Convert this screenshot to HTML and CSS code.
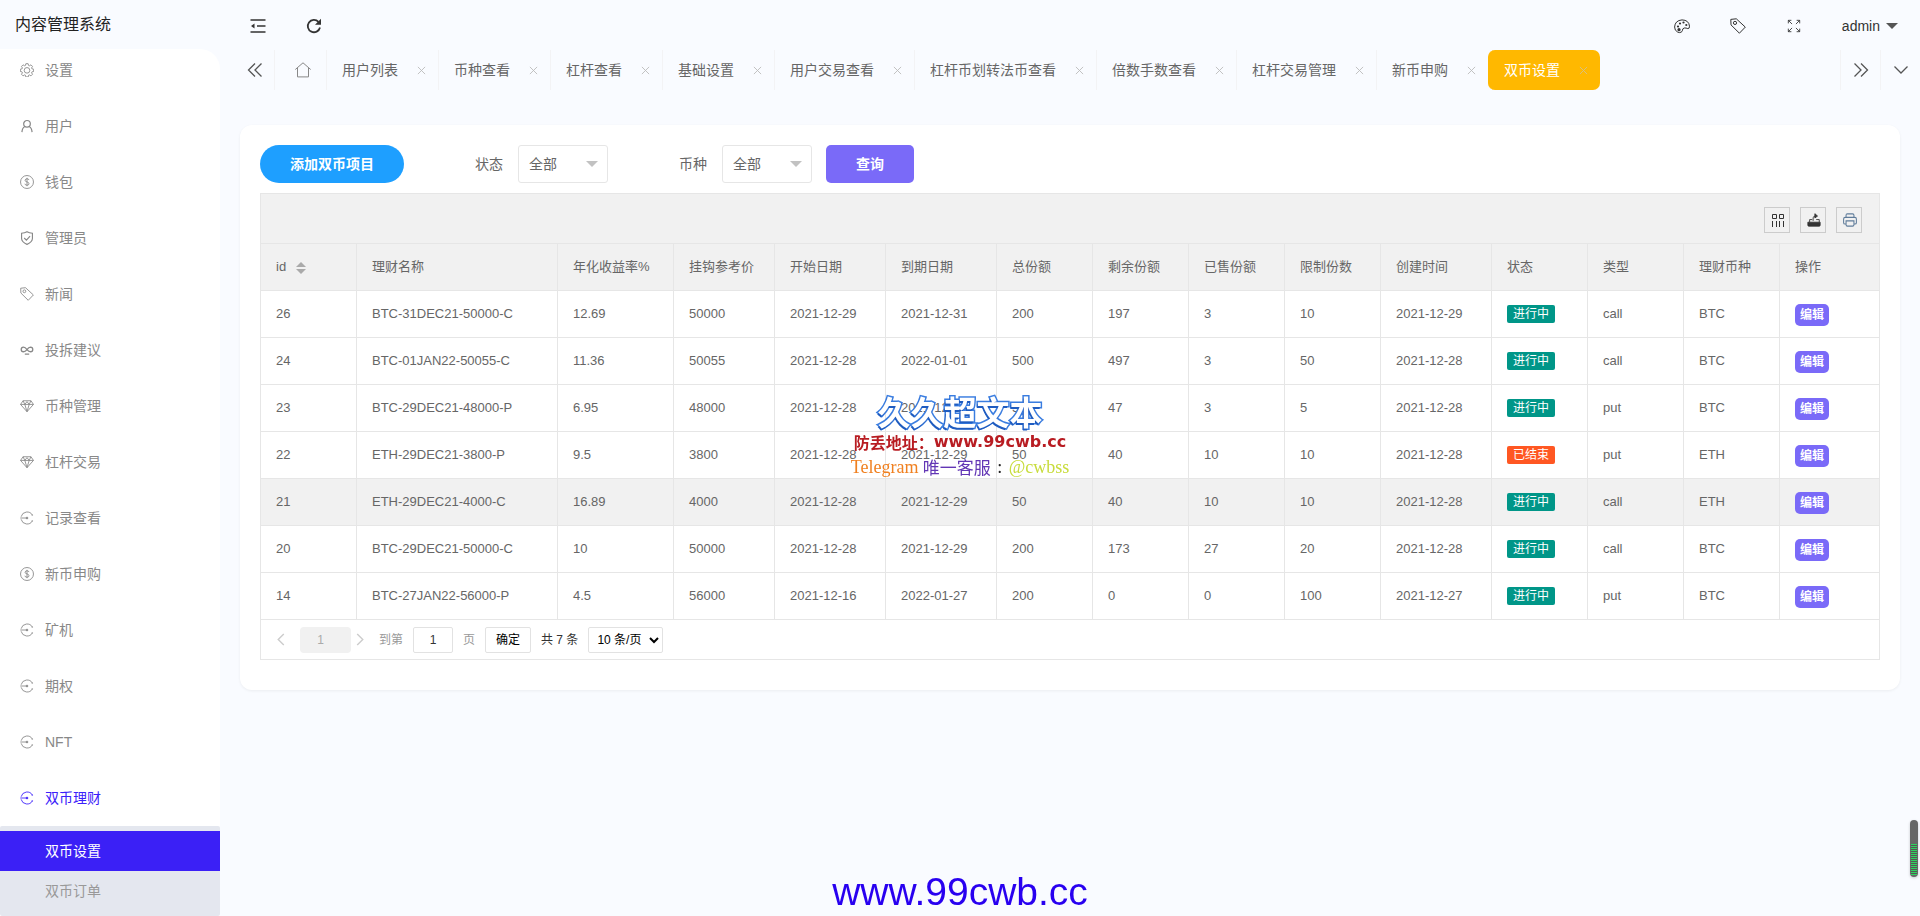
FILE: index.html
```html
<!DOCTYPE html>
<html lang="zh-CN">
<head>
<meta charset="utf-8">
<title>内容管理系统</title>
<link rel="stylesheet" href="styles.css">
</head>
<body>
<svg class="defs" aria-hidden="true">
  <symbol id="i-gear" viewBox="0 0 16 16"><path d="M6.700 .8h2.600l.5 2 .9.400 1.800-1.100 1.800 1.800-1.100 1.800.4.900 2 .500v2.600l-2 .500-.4.900 1.100 1.800-1.800 1.800-1.800-1.100-.9.400-.5 2H6.700l-.5-2-.9-.400-1.800 1.100-1.800-1.800 1.100-1.800-.4-.900-2-.500V7.100l2-.500.4-.900-1.100-1.800 1.800-1.800 1.800 1.100.9-.400z"/><circle cx="8" cy="8.400" r="3.200"/></symbol>
  <symbol id="i-user" viewBox="0 0 16 16"><g stroke-width="1.400"><circle cx="8" cy="5.500" r="3.800"/><path d="M5.500 8.600Q2.600 10 2.200 15M10.500 8.600q2.900 1.400 3.300 6.400"/></g></symbol>
  <symbol id="i-dollar" viewBox="0 0 16 16"><circle cx="8" cy="8" r="7.400"/><path d="M10.300 5.800Q9.900 4.300 8 4.300T5.800 6Q5.800 7.500 8 7.900T10.300 10Q10.200 11.700 8 11.700T5.600 10M8 3.200v9.600"/></symbol>
  <symbol id="i-shield" viewBox="0 0 16 16"><path stroke-width="1.300" d="M8 .9q2.500 1.500 6.200 1.700v6Q14 12.800 8 15.300 2 12.800 1.800 8.600v-6Q5.500 2.400 8 .9zM4.800 8l2.500 2.400 4.200-4.600"/></symbol>
  <symbol id="i-tag" viewBox="0 0 16 16"><path d="M.8 1.400 6.300.8l9 8.300-5.900 6.100L1 6.900z"/><circle cx="5" cy="4.900" r="1.600"/></symbol>
  <symbol id="i-loop" viewBox="0 0 16 16"><path stroke-width="1.500" d="M8 7.500Q6 4.800 4 4.800A2.600 2.600 0 1 0 4 10Q6 10 8 7.500T12 4.800A2.600 2.600 0 1 1 12 10Q10 10 8 7.500M5.500 12.700h5"/></symbol>
  <symbol id="i-gem" viewBox="0 0 16 16"><path d="M3.500 2h9l2.900 4.200L8 14.500.6 6.200zM.6 6.200h14.800M3.500 2l2 4.200L8 14.500l2.500-8.300 2-4.200M5.500 6.200 8 3l2.500 3.200"/></symbol>
  <symbol id="i-gauge" viewBox="0 0 16 16"><path d="M.3 8h7.200M14.200 4.700A7 7 0 0 0 1.300 6.500M1.300 9.500a7 7 0 0 0 12.900 1.800M13.200 4.700h1.600M13.200 11.300h1.600"/><circle cx="8" cy="8" r="1" fill="currentColor"/></symbol>
  <symbol id="i-close" viewBox="0 0 10 10"><path d="m1 1 8 8M9 1 1 9"/></symbol>
</svg>

<aside class="sidebar">
  <h1 class="brand">内容管理系统</h1>
  <nav class="menu">
    <a class="menu-item" href="#"><svg class="icon"><use href="#i-gear"/></svg>设置</a>
    <a class="menu-item" href="#"><svg class="icon"><use href="#i-user"/></svg>用户</a>
    <a class="menu-item" href="#"><svg class="icon"><use href="#i-dollar"/></svg>钱包</a>
    <a class="menu-item" href="#"><svg class="icon"><use href="#i-shield"/></svg>管理员</a>
    <a class="menu-item" href="#"><svg class="icon"><use href="#i-tag"/></svg>新闻</a>
    <a class="menu-item" href="#"><svg class="icon"><use href="#i-loop"/></svg>投拆建议</a>
    <a class="menu-item" href="#"><svg class="icon"><use href="#i-gem"/></svg>币种管理</a>
    <a class="menu-item" href="#"><svg class="icon"><use href="#i-gem"/></svg>杠杆交易</a>
    <a class="menu-item" href="#"><svg class="icon"><use href="#i-gauge"/></svg>记录查看</a>
    <a class="menu-item" href="#"><svg class="icon"><use href="#i-dollar"/></svg>新币申购</a>
    <a class="menu-item" href="#"><svg class="icon"><use href="#i-gauge"/></svg>矿机</a>
    <a class="menu-item" href="#"><svg class="icon"><use href="#i-gauge"/></svg>期权</a>
    <a class="menu-item" href="#"><svg class="icon"><use href="#i-gauge"/></svg>NFT</a>
    <a class="menu-item open" href="#"><svg class="icon"><use href="#i-gauge"/></svg>双币理财</a>
    <div class="submenu">
      <a class="sub-item current" href="#">双币设置</a>
      <a class="sub-item" href="#">双币订单</a>
    </div>
  </nav>
</aside>

<div class="main">
  <header class="topbar">
    <button class="top-btn" aria-label="收起菜单"><svg class="icon-lg bold" viewBox="0 0 16 16"><path d="M.5 2h15M7 8h8.500M.5 14h15"/><path d="M4.500 5.500v5L1 8z" fill="currentColor" stroke="none"/></svg></button>
    <button class="top-btn" aria-label="刷新"><svg class="icon-lg heavy" viewBox="0 0 16 16"><path d="M12.500 3.800A6.200 6.200 0 1 0 14 9.500"/><path d="M15 .8v6H9z" fill="currentColor" stroke="none"/></svg></button>
    <div class="top-right">
      <button class="top-btn" aria-label="主题"><svg class="icon-lg" viewBox="0 0 16 16"><path d="M7 14.200Q5.800 15 3.800 14.200.5 12.600.6 9 1 2.500 8 1.900 14.800 2 15.500 8.200q.1 2.600-1.700 2.400-1.700-.8-3.600-.6-1.900.6-1.700 2.300Q8.400 13.600 7 14.200z"/><g fill="currentColor" stroke="none"><circle cx="4" cy="8.500" r="1.100"/><circle cx="6" cy="5.500" r="1.100"/><circle cx="9.500" cy="4.500" r="1.100"/><circle cx="12.300" cy="7" r="1.100"/><circle cx="5" cy="11.700" r="1.600"/></g></svg></button>
      <button class="top-btn" aria-label="便签"><svg class="icon-lg"><use href="#i-tag"/></svg></button>
      <button class="top-btn" aria-label="全屏"><svg class="icon" viewBox="0 0 16 16"><path d="M1.500 5V1.500H5M1.500 1.500l4.300 4.300M11 1.500h3.500V5M14.500 1.500l-4.300 4.300M1.500 11v3.500H5M1.500 14.500l4.300-4.300M14.500 11v3.500H11M14.500 14.500l-4.300-4.300"/></svg></button>
      <button class="account">admin<span class="caret"></span></button>
    </div>
  </header>

  <div class="tabs">
    <button class="tab-ctl first" aria-label="向左"><svg class="icon-lg mid" viewBox="0 0 16 16"><path d="M8 1.500 1.500 8 8 14.500M14.500 1.500 8 8l6.500 6.500"/></svg></button>
    <button class="tab-ctl home" aria-label="首页"><svg class="icon-lg" viewBox="0 0 16 16"><path d="M.3 7.500 8 .8l7.700 6.700M2.500 5.900v9h11v-9"/></svg></button>
    <a class="tab" href="#">用户列表<svg class="x"><use href="#i-close"/></svg></a>
    <a class="tab" href="#">币种查看<svg class="x"><use href="#i-close"/></svg></a>
    <a class="tab" href="#">杠杆查看<svg class="x"><use href="#i-close"/></svg></a>
    <a class="tab" href="#">基础设置<svg class="x"><use href="#i-close"/></svg></a>
    <a class="tab" href="#">用户交易查看<svg class="x"><use href="#i-close"/></svg></a>
    <a class="tab" href="#">杠杆币划转法币查看<svg class="x"><use href="#i-close"/></svg></a>
    <a class="tab" href="#">倍数手数查看<svg class="x"><use href="#i-close"/></svg></a>
    <a class="tab" href="#">杠杆交易管理<svg class="x"><use href="#i-close"/></svg></a>
    <a class="tab" href="#">新币申购<svg class="x"><use href="#i-close"/></svg></a>
    <a class="tab active" href="#">双币设置<svg class="x"><use href="#i-close"/></svg></a>
    <div class="tabs-end">
      <button class="tab-ctl" aria-label="向右"><svg class="icon-lg mid" viewBox="0 0 16 16"><path d="M1.500 1.500 8 8l-6.500 6.500M8 1.500 14.500 8 8 14.500"/></svg></button>
      <button class="tab-ctl" aria-label="更多"><svg class="icon-lg mid" viewBox="0 0 16 16"><path d="M1.500 4.500 8 11l6.500-6.500"/></svg></button>
    </div>
  </div>

  <main class="card">
    <form class="filters">
      <button class="add" type="button">添加双币项目</button>
      <label for="status">状态</label>
      <div class="pick"><select id="status"><option>全部</option></select></div>
      <label for="coin">币种</label>
      <div class="pick"><select id="coin"><option>全部</option></select></div>
      <button class="search" type="button">查询</button>
    </form>

    <section class="grid">
      <div class="tools">
        <button class="tool" aria-label="筛选列"><svg class="icon" viewBox="0 0 14 14"><path d="M1.500 1.500h4v4h-4zM8.500 1.500h4v4h-4zM1.500 8v6M5.500 8v6M8.500 8v6M12.500 8v6"/></svg></button>
        <button class="tool" aria-label="导出"><svg class="icon" viewBox="0 0 16 16"><path d="M1 10.500h14V14q0 1-1 1H2q-1 0-1-1z" fill="currentColor"/><path d="M3 10.500V7.500h3M10.500 7.500H14v3M7 9V5.500Q7 3.500 10 3.500"/><path d="m9 .8 3 2.700-3 2.200z" fill="currentColor"/></svg></button>
        <button class="tool print" aria-label="打印"><svg class="icon" viewBox="0 0 16 16"><path stroke-width="1.200" d="M3.500 5V2.500Q3.500 1 5 1h6q1.500 0 1.500 1.500V5M3.500 12.500H2.300Q.7 12.500.7 11V6.800Q.7 5 2.500 5h11q1.800 0 1.800 1.800V11q0 1.500-1.600 1.500h-1.200M3.500 9h9v4.500q0 1.500-1.500 1.500H5q-1.500 0-1.500-1.500z"/></svg></button>
      </div>
      <table>
        <colgroup><col class="w96"><col class="w201"><col class="w116"><col class="w101"><col class="w111"><col class="w111"><col class="w96"><col class="w96"><col class="w96"><col class="w96"><col class="w111"><col class="w96"><col class="w96"><col class="w96"><col></colgroup>
        <thead><tr><th>id<span class="sort"></span></th><th>理财名称</th><th>年化收益率%</th><th>挂钩参考价</th><th>开始日期</th><th>到期日期</th><th>总份额</th><th>剩余份额</th><th>已售份额</th><th>限制份数</th><th>创建时间</th><th>状态</th><th>类型</th><th>理财币种</th><th>操作</th></tr></thead>
        <tbody>
          <tr><td>26</td><td>BTC-31DEC21-50000-C</td><td>12.69</td><td>50000</td><td>2021-12-29</td><td>2021-12-31</td><td>200</td><td>197</td><td>3</td><td>10</td><td>2021-12-29</td><td><span class="badge">进行中</span></td><td>call</td><td>BTC</td><td><button class="edit">编辑</button></td></tr>
          <tr><td>24</td><td>BTC-01JAN22-50055-C</td><td>11.36</td><td>50055</td><td>2021-12-28</td><td>2022-01-01</td><td>500</td><td>497</td><td>3</td><td>50</td><td>2021-12-28</td><td><span class="badge">进行中</span></td><td>call</td><td>BTC</td><td><button class="edit">编辑</button></td></tr>
          <tr><td>23</td><td>BTC-29DEC21-48000-P</td><td>6.95</td><td>48000</td><td>2021-12-28</td><td>2021-12-29</td><td>50</td><td>47</td><td>3</td><td>5</td><td>2021-12-28</td><td><span class="badge">进行中</span></td><td>put</td><td>BTC</td><td><button class="edit">编辑</button></td></tr>
          <tr><td>22</td><td>ETH-29DEC21-3800-P</td><td>9.5</td><td>3800</td><td>2021-12-28</td><td>2021-12-29</td><td>50</td><td>40</td><td>10</td><td>10</td><td>2021-12-28</td><td><span class="badge ended">已结束</span></td><td>put</td><td>ETH</td><td><button class="edit">编辑</button></td></tr>
          <tr class="hover"><td>21</td><td>ETH-29DEC21-4000-C</td><td>16.89</td><td>4000</td><td>2021-12-28</td><td>2021-12-29</td><td>50</td><td>40</td><td>10</td><td>10</td><td>2021-12-28</td><td><span class="badge">进行中</span></td><td>call</td><td>ETH</td><td><button class="edit">编辑</button></td></tr>
          <tr><td>20</td><td>BTC-29DEC21-50000-C</td><td>10</td><td>50000</td><td>2021-12-28</td><td>2021-12-29</td><td>200</td><td>173</td><td>27</td><td>20</td><td>2021-12-28</td><td><span class="badge">进行中</span></td><td>call</td><td>BTC</td><td><button class="edit">编辑</button></td></tr>
          <tr><td>14</td><td>BTC-27JAN22-56000-P</td><td>4.5</td><td>56000</td><td>2021-12-16</td><td>2022-01-27</td><td>200</td><td>0</td><td>0</td><td>100</td><td>2021-12-27</td><td><span class="badge">进行中</span></td><td>put</td><td>BTC</td><td><button class="edit">编辑</button></td></tr>
        </tbody>
      </table>
      <div class="pager">
        <button class="arrow" aria-label="上一页"><svg viewBox="0 0 8 14"><path d="M7 1 1 7l6 6"/></svg></button>
        <button class="page">1</button>
        <button class="arrow" aria-label="下一页"><svg viewBox="0 0 8 14"><path d="m1 1 6 6-6 6"/></svg></button>
        <label class="jump" for="page-no">到第</label>
        <input id="page-no" type="text" value="1">
        <span class="unit">页</span>
        <button class="ok">确定</button>
        <span class="total">共 7 条</span>
        <select class="size" aria-label="每页条数"><option>10 条/页</option></select>
      </div>
    </section>
  </main>
</div>

<div class="mark">
  <div class="mark-title">久久超文本</div>
  <div class="mark-site">防丢地址：<span class="mark-url">www.99cwb.cc</span></div>
  <div class="mark-tg"><span class="tg">Telegram</span><span class="only">唯一客服</span><span class="colon">:</span><span class="at">@cwbss</span></div>
</div>
<div class="site">www.99cwb.cc</div>
<div class="meter"><div class="meter-level"></div></div>
</body>
</html>
```

FILE: styles.css
```css
* { box-sizing: border-box; }
body {
  margin: 0;
  min-height: 100vh;
  display: flex;
  background: #f9fbff;
  color: #666;
  font: 14px/20px "Liberation Sans", "Noto Sans CJK SC", sans-serif;
}
button, input, select { font: inherit; color: inherit; margin: 0; padding: 0; border: 0; background: none; }
a { color: inherit; text-decoration: none; }
svg { display: block; flex: none; fill: none; stroke: currentColor; stroke-width: 1; }
.defs { position: absolute; width: 0; height: 0; }
.icon { width: 14px; height: 14px; }
.icon-lg { width: 16px; height: 16px; }
.mid { stroke-width: 1.3; }
.bold { stroke-width: 1.5; }
.heavy { stroke-width: 1.8; }

.sidebar { width: 220px; flex: none; display: flex; flex-direction: column; }
.brand { margin: 0; height: 49px; padding: 11px 15px 0; font-size: 16px; line-height: 28px; font-weight: 400; color: #222; }
.menu { flex: 1; background: #fff; border-radius: 0 20px 0 0; padding-top: 1px; }
.menu-item { display: flex; align-items: center; gap: 11px; height: 40px; margin-bottom: 16px; padding-left: 20px; color: #888; }
.menu-item.open { color: #3b20fa; margin-bottom: 8px; }
.submenu { background: #e4e7ef; padding: 5px 0; border-radius: 2px; }
.sub-item { display: block; padding-left: 45px; line-height: 40px; color: #999; }
.sub-item.current { background: #3b20f6; color: #fff; }

.main { flex: 1; min-width: 0; padding: 0 20px; }
.topbar { display: flex; align-items: center; gap: 24px; height: 50px; padding-top: 2px; color: #333; }
.top-btn { width: 32px; height: 48px; display: flex; align-items: center; justify-content: center; }
.topbar > .top-btn:first-child { margin-left: 2px; }
.top-right { margin-left: auto; display: flex; align-items: center; gap: 24px; }
.account { display: flex; align-items: center; gap: 6px; margin-left: 8px; padding-right: 2px; }
.caret { border: 6px solid transparent; border-top-color: #555; border-bottom: 0; }

.tabs { display: flex; height: 40px; margin: 0 -20px 0 -5px; }
.tab-ctl { width: 40px; height: 40px; display: flex; align-items: center; justify-content: center; color: #555; border-left: 1px solid #f3f3f5; flex: none; }
.tab-ctl.first { width: 39px; border-left: 0; }
.tab-ctl.home { width: 52px; padding-left: 4px; color: #888; }
.tab { display: flex; align-items: center; gap: 19px; padding: 0 12px 0 15px; border-left: 1px solid #f3f3f5; line-height: 40px; white-space: nowrap; }
.x { width: 9px; height: 9px; color: #bbb; }
.tab.active { background: #ffb800; color: #fff; border-left-color: #ffb800; border-radius: 7px; }
.tab.active .x { color: #d5c08a; }
.tabs-end { display: flex; margin-left: auto; }

.card { margin-top: 35px; padding: 20px 20px 30px; background: #fff; border-radius: 12px; box-shadow: 0 1px 3px rgba(0, 0, 0, .06); }
.filters { display: flex; align-items: center; height: 38px; margin-bottom: 10px; }
.filters label { margin: 0 15px 0 71px; }
.add { width: 144px; height: 38px; border-radius: 19px; background: #1e9fff; color: #fff; font-weight: 700; }
.search { width: 88px; height: 38px; margin-left: 14px; border-radius: 5px; background: #7a6af8; color: #fff; font-weight: 700; }
.pick { display: grid; align-items: center; }
.pick > *, .pick::after { grid-area: 1 / 1; }
.pick select { appearance: none; width: 90px; height: 38px; padding: 0 10px; border: 1px solid #e6e6e6; border-radius: 3px; background: #fff; }
.pick::after { content: ""; justify-self: end; margin-right: 10px; border: 6px solid transparent; border-top-color: #c2c2c2; border-bottom: 0; pointer-events: none; }

.grid { border: 1px solid #e6e6e6; }
.tools { display: flex; align-items: center; justify-content: flex-end; gap: 10px; height: 50px; padding: 2px 17px 0 0; background: #f1f1f1; border-bottom: 1px solid #e6e6e6; }
.tool { width: 26px; height: 26px; display: flex; align-items: center; justify-content: center; padding: 1px 0 0 2px; border: 1px solid #ccc; color: #333; }
.print { color: #607d9b; }
table { width: 100%; table-layout: fixed; border-collapse: separate; border-spacing: 0; font-size: 13px; }
.w96 { width: 96px; } .w101 { width: 101px; } .w111 { width: 111px; } .w116 { width: 116px; } .w201 { width: 201px; }
th, td { height: 47px; padding: 0 15px; text-align: left; vertical-align: middle; font-weight: 400; white-space: nowrap; border-right: 1px solid #e6e6e6; border-bottom: 1px solid #e6e6e6; }
th:last-child, td:last-child { border-right: 0; }
thead, .hover { background: #f1f1f1; }
.sort { display: inline-grid; gap: 2px; margin-left: 10px; vertical-align: middle; }
.sort::before, .sort::after { content: ""; border: 5px solid transparent; }
.sort::before { border-top: 0; border-bottom-color: #aaa; }
.sort::after { border-bottom: 0; border-top-color: #aaa; }
.badge { display: block; width: fit-content; padding: 0 6px; line-height: 18px; font-size: 12px; color: #fff; background: #009688; border-radius: 2px; }
.badge.ended { background: #ff5722; }
.edit { display: block; height: 22px; margin-top: 2px; padding: 0 5px; font-size: 12px; line-height: 22px; font-weight: 700; color: #fff; background: #7a6af8; border-radius: 5px; }

.pager { display: flex; align-items: center; height: 39px; padding: 0 14px; font-size: 12px; }
.arrow { width: 12px; height: 26px; display: grid; place-items: center; color: #ccc; }
.arrow svg { width: 8px; height: 13px; stroke-width: 1.5; }
.page { width: 51px; height: 26px; margin: 0 3px 0 13px; padding-right: 10px; background: #f1f1f1; color: #aaa; border-radius: 4px; }
.jump { margin-left: 13px; color: #999; }
.pager input { width: 40px; height: 26px; margin: 0 10px; text-align: center; color: #333; border: 1px solid #e2e2e2; border-radius: 2px; }
.unit { color: #999; }
.ok { width: 46px; height: 26px; margin: 0 10px; color: #000; border: 1px solid #e2e2e2; border-radius: 2px; }
.total { color: #333; }
.size { width: 75px; height: 26px; margin-left: 10px; padding: 0 0 0 4px; color: #000; border: 1px solid #e2e2e2; border-radius: 2px; }

.mark { position: fixed; top: 391px; left: 50%; transform: translateX(-50%); width: 220px; text-align: center; white-space: nowrap; pointer-events: none; }
.mark-title { font: 700 33px/40px "Noto Sans CJK SC", sans-serif; color: #fff; -webkit-text-stroke: 3px #3a7de0; paint-order: stroke fill; text-shadow: -1px 2px 0 #1f5cc0; }
.mark-site { display: flex; justify-content: center; font: 700 16px/22px "Noto Sans CJK SC", sans-serif; color: #b81c22; }
.mark-url { font: 700 16px/22px "DejaVu Sans", sans-serif; }
.mark-tg { display: flex; justify-content: center; font: 18px/28px "Liberation Serif", serif; }
.tg { width: 72px; text-align: left; color: #f08020; }
.only { font: 17px/28px "Noto Sans CJK SC", sans-serif; color: #6236b5; }
.colon { width: 18px; color: #222; }
.at { color: #c8dc3c; }
.site { position: fixed; bottom: 0; left: 50%; transform: translateX(-50%); font-size: 39px; line-height: 48px; color: #2800f0; pointer-events: none; }
.meter { position: fixed; right: 2px; top: 820px; width: 8px; height: 57px; padding: 0 1px 2px; display: flex; align-items: flex-end; background: #666; border-radius: 4px; overflow: hidden; box-shadow: 0 1px 3px rgba(0, 0, 0, .2); }
.meter-level { width: 100%; height: 31px; background: repeating-linear-gradient(#2dd35f 0 1px, #555 1px 2px); }
```
